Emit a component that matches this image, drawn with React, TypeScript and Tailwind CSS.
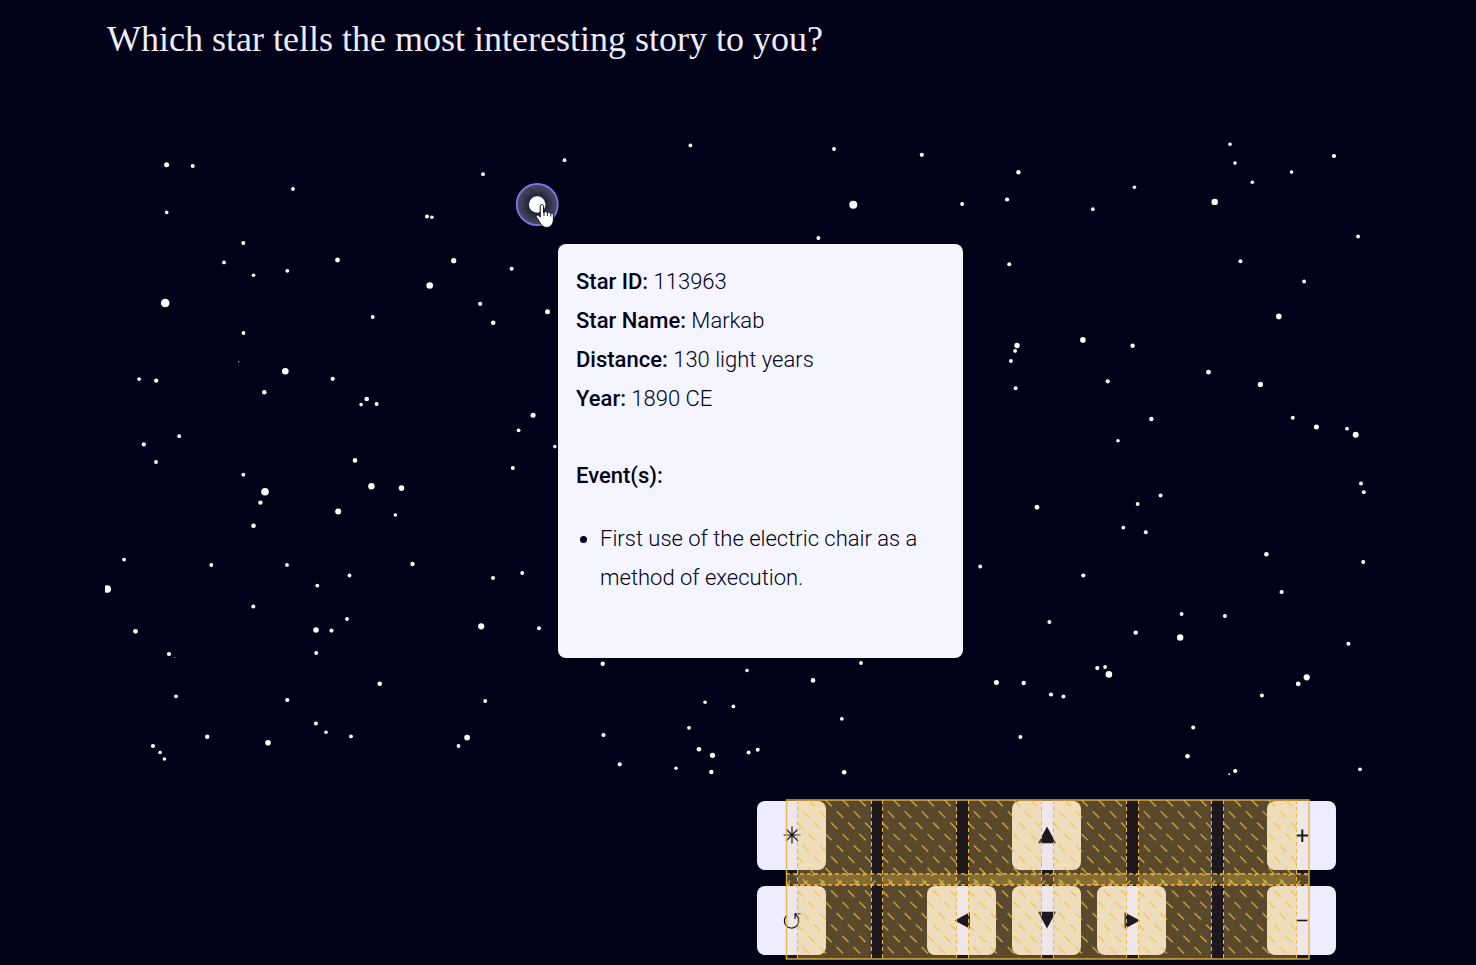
import React from "react";

type Star = [x: number, y: number, r: number];

const stars: Star[] = [
  [166.6, 164.7, 2.5], [192.7, 166, 2], [293, 189, 1.9], [166.7, 212.4, 1.8], [483, 174.2, 1.9],
  [427, 216.6, 2], [431.9, 217.2, 1.8], [243.3, 243, 2], [224, 262.4, 1.9], [253.5, 275.2, 1.8],
  [287.3, 270.8, 1.9], [337.5, 260, 2.4], [453.7, 260.7, 2.6], [429.7, 285.5, 3.3], [511.6, 268.8, 2],
  [165.2, 303, 4.3], [372.7, 317, 1.9], [480.2, 303.8, 2.1], [493.2, 322.7, 2.3], [547.5, 311.8, 2.5],
  [243.5, 333, 1.9], [238.8, 361.7, 0.6], [285.3, 371.2, 3.3], [332.7, 378.8, 2.1], [139.1, 379.1, 1.9],
  [156.2, 380.7, 2.1], [264.3, 392.3, 2.3], [366.7, 399, 2.3], [361.1, 404.6, 1.8], [376.6, 404, 2],
  [533.1, 415.2, 2.5], [518.6, 430.3, 1.9], [143.8, 444.4, 2.1], [179.2, 436.2, 1.9], [554.8, 446.6, 1.8],
  [156, 462, 1.9], [243.3, 474.7, 1.9], [265, 491.8, 3.8], [260.4, 502.6, 2.2], [253.5, 525.8, 2.3],
  [355, 460.4, 2.3], [371.4, 486.3, 3.2], [401.5, 488.1, 2.8], [338.2, 511.6, 3], [395.4, 515, 1.8],
  [512.8, 468.1, 2], [124.1, 559.6, 1.9], [211.3, 565, 1.9], [287, 564.9, 1.9], [412.5, 564, 2.2],
  [349.5, 575.5, 1.9], [317.3, 585.6, 1.9], [493, 578.1, 2], [522.2, 573, 1.9], [107.3, 589, 3.8],
  [253.3, 606.6, 2], [135.5, 631.3, 2.4], [169, 654, 2.1], [174.8, 657.4, 0.5], [316, 630, 2.8],
  [331.5, 630.6, 2.1], [347, 619, 1.9], [316.2, 653, 1.9], [481.2, 626.3, 3.1], [539, 628.3, 2],
  [379.7, 683.7, 2.3], [176, 696.3, 1.9], [287.3, 700, 2.1], [485.2, 701, 1.9], [315.9, 723.4, 2],
  [326, 732.2, 1.8], [351, 736.4, 1.9], [207.2, 736.8, 2.2], [268, 742.7, 2.8], [467.1, 737.6, 2.9],
  [458.5, 746, 1.9], [153, 746, 2.1], [160.1, 752.5, 1.8], [164.4, 759, 1.8],
  [564.5, 160.2, 1.9], [690.4, 145.4, 1.9], [834, 149, 1.9], [921.8, 154.8, 2.1], [853.3, 204.8, 4],
  [818.4, 238, 2],
  [602.7, 663.8, 2.2], [747, 670.5, 1.8], [861, 663, 1.9], [813, 680.4, 2.3], [705.1, 702.2, 1.8],
  [733.4, 706.4, 1.9], [841.8, 718.8, 1.9], [689, 727.8, 1.9], [603.5, 735, 2.1], [698.9, 749.3, 2.3],
  [712.5, 755.3, 2.6], [748.6, 752.6, 2], [757.7, 749.7, 2], [619.7, 764.3, 2.1], [676, 768.2, 1.8],
  [711.3, 772, 2.2], [844.2, 772.3, 2.3],
  [962.1, 204, 1.9], [1018.4, 172.3, 2.2], [1007.1, 199.5, 2.1], [1092.8, 209.2, 1.9], [1134.4, 187.2, 1.8],
  [1230, 144.2, 1.8], [1235, 163.1, 1.8], [1252.3, 182.2, 1.8], [1291.6, 172.1, 1.8], [1334, 156, 2.1],
  [1214.7, 201.9, 3.2], [1358.1, 236.5, 1.9], [1009.3, 264.3, 2], [1240.4, 261.2, 2], [1304.1, 281.5, 1.9],
  [1278.8, 316.4, 2.8], [1017, 345.5, 2.7], [1015.1, 350.9, 1.9], [1010.9, 361, 1.9], [1082.9, 339.9, 2.8],
  [1132.6, 345.7, 2.2], [1015.6, 388.2, 2], [1107.7, 381.3, 2.1], [1208.5, 372.2, 2.4], [1260.4, 384.4, 2.6],
  [1151.3, 419, 2.2], [1118, 440.7, 1.8], [1292.8, 417.7, 2], [1316.4, 426.9, 2.5], [1347, 428.7, 1.9],
  [1355.7, 434.8, 3],
  [1361, 483.4, 2], [1363.8, 492.2, 1.9], [1037, 507.2, 2.4], [1137.6, 504, 1.9], [1160.6, 495.4, 2],
  [1123.3, 527.6, 1.9], [1145.8, 532.2, 2], [1266.4, 554.2, 2.3], [1363.2, 562, 2], [980.2, 566.5, 1.9],
  [1083.3, 575.5, 2.1], [1281.6, 592, 2.1], [1181.6, 614, 1.9], [1224.9, 616, 2], [1049.4, 622, 2],
  [1135.7, 632.6, 2.2], [1180.2, 637.5, 3.2], [1348.4, 643.7, 2], [1097.3, 668.1, 2.1], [1105.1, 667, 1.9],
  [1108.9, 674.4, 3.3], [996.4, 682.4, 2.5], [1023.7, 683, 2.2], [1051, 694.5, 2.1], [1063.4, 696.6, 2],
  [1306.7, 677.3, 3.1], [1298.2, 683.8, 2.4], [1261.9, 695.6, 2], [1020.4, 737, 2], [1193.2, 727.6, 2],
  [1187.5, 756.2, 2.3], [1229.2, 774.2, 0.9], [1235.2, 771, 2.1], [1360, 769.3, 1.9],
];

const details = [
  { label: "Star ID:", value: "113963" },
  { label: "Star Name:", value: "Markab" },
  { label: "Distance:", value: "130 light years" },
  { label: "Year:", value: "1890 CE" },
];

function StarMap() {
  return (
    <svg viewBox="105 128 1266 647" className="block w-full" role="img" aria-label="Star map">
      <defs>
        <radialGradient id="halo">
          <stop offset="0.4" stopColor="#23223a" />
          <stop offset="0.85" stopColor="#424258" />
          <stop offset="1" stopColor="#46465e" />
        </radialGradient>
      </defs>
      <g fill="#fff">
        {stars.map(([x, y, r]) => (
          <circle key={`${x}-${y}`} cx={x} cy={y} r={r} />
        ))}
      </g>
      <circle cx="537.2" cy="204.5" r="20.5" fill="url(#halo)" stroke="#7878e4" strokeWidth="1.8" />
      <circle cx="537.2" cy="204.5" r="8.3" fill="#fff" />
      <path
        d="M540.2 206.5c0-2.6 3.4-2.6 3.4 0v6l.6-.2c.4-1 2.6-1 3 .3l.5.1c.6-.8 2.6-.6 2.9.7l.5.1c.8-.7 2.3-.2 2.3 1.4v4.5c0 4-2.2 8-6.8 8c-3.4 0-5-1.8-6.5-4.5l-3.6-5.5c-1.3-2 1.2-3.2 2.5-1.8l1.2 1.3z"
        fill="#fff"
        stroke="#05050f"
        strokeWidth="1"
      />
      <path d="M544 212v4M547.4 212.5v3.5M550.8 213.5v3" stroke="#05050f" strokeWidth="0.9" />
    </svg>
  );
}

type Control = { label: string; cell: string; icon: React.ReactNode };

const controls: Control[] = [
  {
    label: "Toggle labels",
    cell: "col-start-1 row-start-1",
    icon: <path d="M12 2.5v17M3.5 11h17M6 5l12 12M18 5L6 17" stroke="currentColor" strokeWidth="1.2" />,
  },
  {
    label: "Pan up",
    cell: "col-start-4 row-start-1",
    icon: <path d="M12 2.5L21 19.2H3z" fill="currentColor" />,
  },
  {
    label: "Zoom in",
    cell: "col-start-7 row-start-1",
    icon: <path d="M12.3 5.5v12.5M6.3 11.5h12" stroke="currentColor" strokeWidth="2" />,
  },
  {
    label: "Reset view",
    cell: "col-start-1 row-start-2",
    icon: (
      <path
        d="M7 6.3A7.200 7.200 0 1 0 17.3 7.500M15 10V4.800H20.500M15.200 5l4 4.500"
        fill="none"
        stroke="currentColor"
        strokeWidth="1.2"
      />
    ),
  },
  {
    label: "Pan left",
    cell: "col-start-3 row-start-2",
    icon: <path d="M4.5 11.500L20 3.200v16.600z" fill="currentColor" />,
  },
  {
    label: "Pan down",
    cell: "col-start-4 row-start-2",
    icon: <path d="M12 19.500L21 2.700H3z" fill="currentColor" />,
  },
  {
    label: "Pan right",
    cell: "col-start-5 row-start-2",
    icon: <path d="M20 11.500L4.500 3.200v16.600z" fill="currentColor" />,
  },
  {
    label: "Zoom out",
    cell: "col-start-7 row-start-2",
    icon: <path d="M7 11.500h10.500" stroke="currentColor" strokeWidth="1.600" />,
  },
];

const columnGaps = [
  [797.5, 871.5],
  [882.5, 956.5],
  [968.5, 1041.5],
  [1053.5, 1126.5],
  [1138.5, 1211.5],
  [1223.5, 1296.5],
];

function GridOverlay() {
  return (
    <svg
      viewBox="785 798 526 163"
      className="pointer-events-none absolute -top-[3px] left-7 h-[163px] w-[526px]"
      aria-hidden="true"
    >
      <defs>
        <clipPath id="row-gap">
          <rect x="786.5" y="874" width="522.5" height="11" />
        </clipPath>
        {columnGaps.map(([a, b]) => (
          <clipPath key={a} id={`gap-${a}`}>
            <rect x={a} y="800" width={b - a} height="159" />
          </clipPath>
        ))}
      </defs>
      <rect x="786.5" y="800" width="522.5" height="159" fill="#efc14c" fillOpacity="0.12" />
      {columnGaps.map(([a, b]) => (
        <g key={a} clipPath={`url(#gap-${a})`}>
          <rect x={a} y="800" width={b - a} height="159" fill="#efc14c" fillOpacity="0.295" />
          {Array.from({ length: 15 }, (_, i) => {
            const x = a - 159 + i * 17;
            return (
              <line
                key={i}
                x1={x}
                y1="800"
                x2={x + 160}
                y2="960"
                stroke="#f0bd50"
                strokeOpacity="0.7"
                strokeWidth="1.5"
                strokeDasharray="9 7"
              />
            );
          })}
        </g>
      ))}
      <g clipPath="url(#row-gap)">
        <rect x="786.5" y="874" width="522.5" height="11" fill="#efc14c" fillOpacity="0.295" />
        {Array.from({ length: 32 }, (_, i) => (
          <line
            key={i}
            x1={784 + i * 17}
            y1="887"
            x2={799 + i * 17}
            y2="872"
            stroke="#f0bd50"
            strokeOpacity="0.7"
            strokeWidth="1.5"
            strokeDasharray="9 7"
          />
        ))}
      </g>
      <g stroke="#f0b93a" strokeWidth="1" strokeDasharray="4 3">
        {columnGaps.flat().map((x) => (
          <line key={x} x1={x} y1="800" x2={x} y2="959" />
        ))}
        <g strokeWidth="1.8" strokeOpacity="0.8">
          <line x1="786" y1="873.8" x2="1309" y2="873.8" />
          <line x1="786" y1="885" x2="1309" y2="885" />
        </g>
      </g>
      <rect x="786.5" y="800" width="522.5" height="159" fill="none" stroke="#e9b63f" strokeOpacity="0.9" strokeWidth="1.5" />
    </svg>
  );
}

export default function App() {
  return (
    <div className="min-h-screen bg-[#010118] px-6 pb-[10px] font-['Roboto',sans-serif]">
      <main className="mx-auto flex max-w-[1266px] flex-col">
        <h1 className="pt-[15px] pl-0.5 font-['Liberation_Serif',serif] text-[36px] leading-[48px] text-[#eeedff]">
          Which star tells the most interesting story to you?
        </h1>

        <section className="relative mt-[65px]">
          <StarMap />
          <article
            role="tooltip"
            className="absolute top-[116px] left-[453px] min-h-[414px] w-[405px] rounded-lg bg-[#f5f5ff] px-[18px] pt-[18px] text-[22px] leading-[39px] font-light text-[#010118]"
          >
            {details.map(({ label, value }) => (
              <p key={label}>
                <strong className="font-medium">{label}</strong> {value}
              </p>
            ))}
            <p className="mt-[38px]">
              <strong className="font-medium">Event(s):</strong>
            </p>
            <ul className="mt-6 list-disc pl-6">
              <li>First use of the electric chair as a method of execution.</li>
            </ul>
          </article>
        </section>

        <div className="relative mt-[26px] mr-[35px] grid grid-cols-[repeat(7,69px)] grid-rows-[repeat(2,69px)] gap-4 self-end">
          {controls.map(({ label, cell, icon }) => (
            <button
              key={label}
              type="button"
              aria-label={label}
              className={`flex items-center justify-center rounded-lg bg-[#eeedff] text-[#010118] ${cell}`}
            >
              <svg viewBox="0 0 24 24" className="size-6" aria-hidden="true">
                {icon}
              </svg>
            </button>
          ))}
          <GridOverlay />
        </div>
      </main>
    </div>
  );
}
